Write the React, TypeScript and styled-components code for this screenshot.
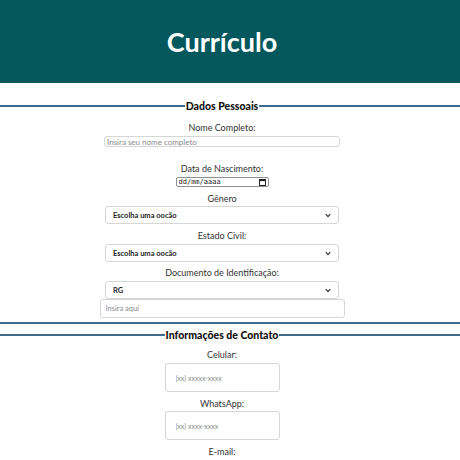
import React from "react";
import styled, { createGlobalStyle } from "styled-components";

const Global = createGlobalStyle`
  html, body { margin: 0; padding: 0; background: #fff; }
  body { font-family: Lato, "Open Sans", sans-serif; color: #333; }
  * { box-sizing: border-box; }
`;

const Header = styled.header`
  height: 83px;
  background: #02585c;
  display: flex;
  align-items: center;
  justify-content: center;
  padding-right: 16px;
`;

const Title = styled.h1`
  margin: 0;
  color: #fff;
  font-size: 27px;
  font-weight: 700;
`;

const Main = styled.main`
  padding-top: 16px;
  display: flex;
  flex-direction: column;
`;

const Fieldset = styled.fieldset<{ $gap?: number }>`
  margin: ${(p) => p.$gap ?? 0}px 0 0 0;
  padding: 0 16px 4px 0;
  border: none;
  border-top: 2px solid #3d6b8f;
  border-bottom: 2px solid #3d6b8f;
  display: flex;
  flex-direction: column;
  align-items: center;
  min-width: 0;
`;

const Legend = styled.legend`
  margin: 0 auto;
  padding: 0 1px;
  font-size: 10.5px;
  font-weight: 900;
  color: #111;
  line-height: 14px;
`;

const Label = styled.label<{ $top: number; $bottom: number }>`
  display: block;
  font-size: 9px;
  line-height: 12px;
  color: #333;
  text-align: center;
  margin-top: ${(p) => p.$top}px;
  margin-bottom: ${(p) => p.$bottom}px;
`;

const TextInput = styled.input<{ $w: number; $h: number; $pad: number; $fs: number }>`
  width: ${(p) => p.$w}px;
  height: ${(p) => p.$h}px;
  padding: 0 0 0 ${(p) => p.$pad}px;
  border: 1px solid #d6d6d6;
  border-radius: 3px;
  font-family: inherit;
  font-size: ${(p) => p.$fs}px;
  color: #333;
  background: #fff;
  outline: none;
  &::placeholder { color: #8a8a8a; }
`;

const DateBox = styled.div`
  width: 93px;
  height: 10px;
  border: 1px solid #8f8f8f;
  border-radius: 2px;
  display: flex;
  align-items: center;
  justify-content: space-between;
  padding: 0 2px;
  background: #fff;
`;

const DateText = styled.input`
  border: none;
  padding: 0;
  width: 70px;
  height: 8px;
  font-family: "DejaVu Sans Mono", monospace;
  font-size: 7px;
  color: #222;
  background: transparent;
  outline: none;
  &::placeholder { color: #222; }
`;

const chevron = encodeURIComponent(
  `<svg xmlns="http://www.w3.org/2000/svg" width="8" height="6" viewBox="0 0 8 6"><path d="M1 1.2 L4 4.4 L7 1.2" fill="none" stroke="#333" stroke-width="1.6"/></svg>`
);

const Select = styled.select<{ $top: number }>`
  appearance: none;
  -webkit-appearance: none;
  width: 234px;
  height: 18px;
  margin-top: ${(p) => p.$top}px;
  padding: 0 0 0 7px;
  border: 1px solid #d6d6d6;
  border-radius: 3px;
  font-family: inherit;
  font-size: 7.5px;
  font-weight: 700;
  color: #222;
  background: #fff url("data:image/svg+xml,${chevron}") no-repeat right 7px center;
  background-size: 6px 5px;
`;

const CalendarIcon = () => (
  <svg width="7" height="7" viewBox="0 0 7 7">
    <rect x="0.5" y="0.5" width="6" height="6" fill="none" stroke="#222" strokeWidth="1" />
    <rect x="0.5" y="0.5" width="6" height="1.6" fill="#222" />
  </svg>
);

export default function App() {
  return (
    <>
      <Global />
      <Header>
        <Title>Currículo</Title>
      </Header>
      <Main>
        <Fieldset>
          <Legend>Dados Pessoais</Legend>
          <Label $top={9} $bottom={2}>Nome Completo:</Label>
          <TextInput $w={236} $h={11} $pad={2} $fs={8} placeholder="Insira seu nome completo" />
          <Label $top={16} $bottom={2}>Data de Nascimento:</Label>
          <DateBox>
            <DateText placeholder="dd/mm/aaaa" />
            <CalendarIcon />
          </DateBox>
          <Label $top={6} $bottom={0}>Gênero</Label>
          <Select $top={1} defaultValue="">
            <option value="">Escolha uma oocão</option>
          </Select>
          <Label $top={6} $bottom={0}>Estado Civil:</Label>
          <Select $top={2} defaultValue="">
            <option value="">Escolha uma oocão</option>
          </Select>
          <Label $top={5} $bottom={0}>Documento de Identificação:</Label>
          <Select $top={2} defaultValue="rg">
            <option value="rg">RG</option>
          </Select>
          <TextInput $w={245} $h={19} $pad={5} $fs={7.5} placeholder="Insira aqui" />
        </Fieldset>
        <Fieldset $gap={4}>
          <Legend>Informações de Contato</Legend>
          <Label $top={7} $bottom={2}>Celular:</Label>
          <TextInput $w={115} $h={29} $pad={10} $fs={7} placeholder="(xx) xxxxx-xxxx" />
          <Label $top={6} $bottom={1}>WhatsApp:</Label>
          <TextInput $w={115} $h={29} $pad={10} $fs={7} placeholder="(xx) xxxx-xxxx" />
          <Label $top={6} $bottom={2}>E-mail:</Label>
        </Fieldset>
      </Main>
    </>
  );
}
